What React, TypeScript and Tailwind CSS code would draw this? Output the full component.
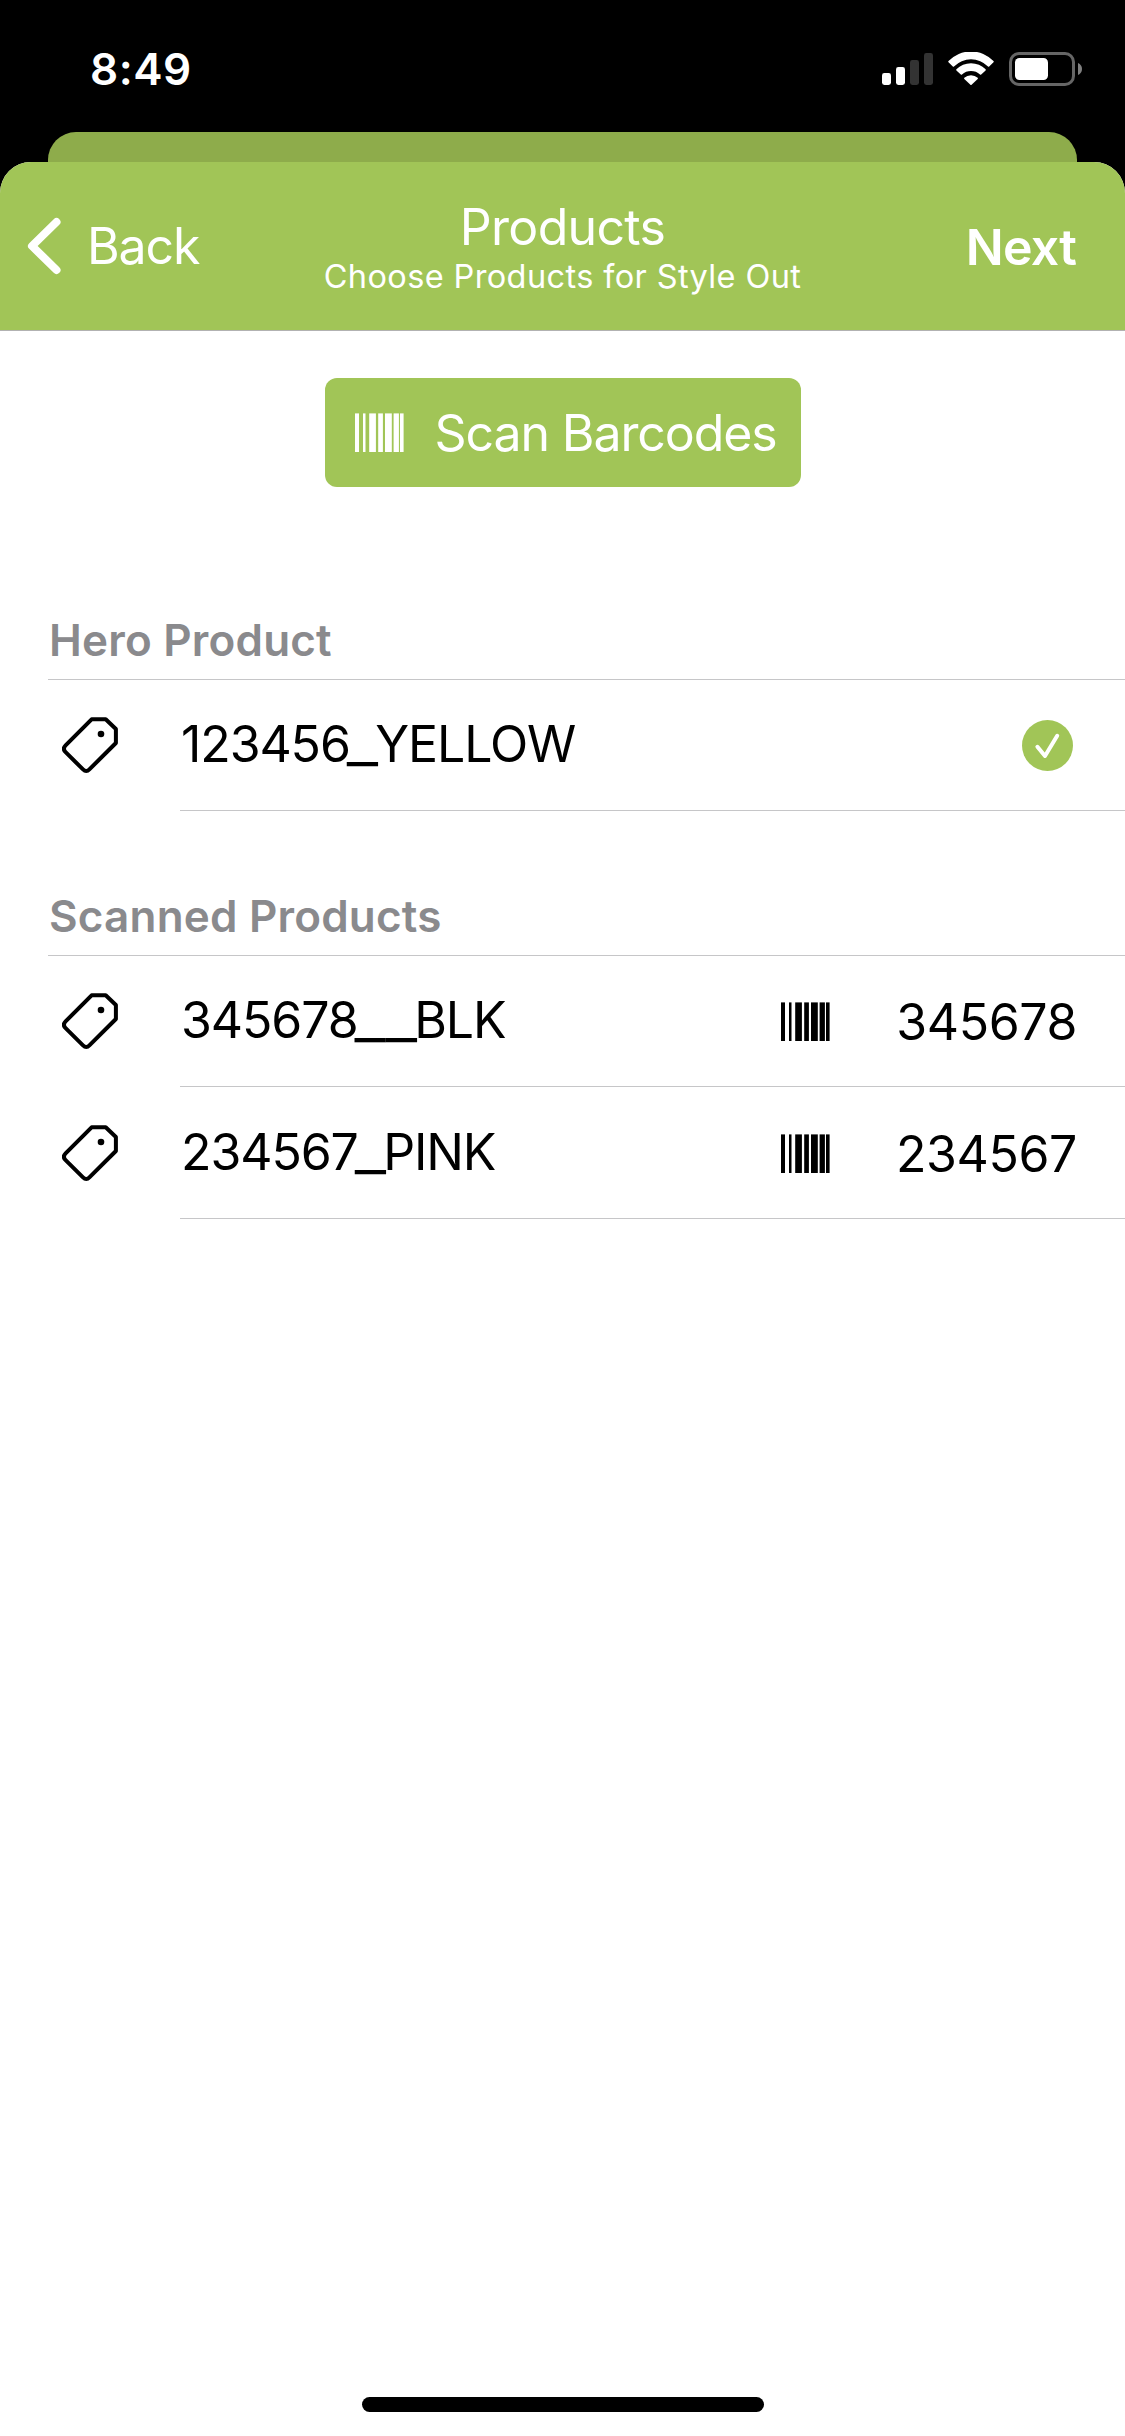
import clsx from "clsx";

interface Product {
  name: string;
  barcode?: string;
  selected?: boolean;
}

const heroProducts: Product[] = [{ name: "123456_YELLOW", selected: true }];

const scannedProducts: Product[] = [
  { name: "345678__BLK", barcode: "345678" },
  { name: "234567_PINK", barcode: "234567" },
];

function SignalIcon() {
  return (
    <svg width="51" height="33" viewBox="0 0 51 33" fill="#fff">
      <rect x="0" y="21" width="9" height="12" rx="2.4" />
      <rect x="14" y="15" width="9" height="18" rx="2.4" />
      <rect x="28" y="8" width="9" height="25" rx="2.4" fill="#333" />
      <rect x="42" y="1" width="9" height="32" rx="2.4" fill="#333" />
    </svg>
  );
}

function WifiIcon() {
  return (
    <svg width="46" height="33" viewBox="0 0 46 33" fill="#fff">
      <path d="M.5 9.1A31 31 0 0 1 45.5 9.1Q46 9.7 45.5 10.3L41.2 14.4Q40.6 15 40 14.4A24 24 0 0 0 6 14.4Q5.4 15 4.8 14.4L.5 10.3Q0 9.7 .5 9.1Z" />
      <path d="M8.4 17.3A20.5 20.5 0 0 1 37.6 17.3Q38.1 17.9 37.6 18.4L33.2 22.5Q32.6 23 32 22.5A13.4 13.4 0 0 0 14 22.5Q13.4 23 12.8 22.5L8.4 18.4Q7.9 17.9 8.4 17.3Z" />
      <path d="M16.3 25.8A10 10 0 0 1 29.7 25.8Q30.2 26.3 29.7 26.9L23.6 32.7Q23 33.2 22.4 32.7L16.3 26.9Q15.8 26.3 16.3 25.8Z" />
    </svg>
  );
}

function BatteryIcon() {
  return (
    <svg width="73" height="34" viewBox="0 0 73 34">
      <rect x="1.5" y="1.5" width="63" height="31" rx="8.5" fill="none" stroke="#666" strokeWidth="3" />
      <rect x="6" y="6" width="33" height="22" rx="4.5" fill="#fff" />
      <path d="M69 11V23C71.6 22 73 19.6 73 17S71.6 12 69 11Z" fill="#808080" />
    </svg>
  );
}

function BarcodeIcon() {
  return (
    <svg width="49" height="39" viewBox="0 0 49 39" fill="currentColor">
      <rect x="0" y=".4" width="4" height="38.6" />
      <rect x="8" y=".4" width="2.5" height="38.6" />
      <rect x="14.2" y=".4" width="6.7" height="38.6" />
      <rect x="23.2" y=".4" width="4.7" height="38.6" />
      <rect x="30" y=".4" width="6.8" height="38.6" />
      <rect x="38.6" y=".4" width="5.3" height="38.6" />
      <rect x="45" y=".4" width="3.6" height="38.6" />
    </svg>
  );
}

function TagIcon() {
  return (
    <svg width="56" height="57" viewBox="0 0 56 57" fill="none" className="shrink-0">
      <path
        d="M29.6 2.3H43.7L53.9 12V26L27.4 52.4Q24.3 55.6 21 52.4L3.6 35.2Q.2 31.8 3.6 28.4Z"
        stroke="#000"
        strokeWidth="4"
        strokeLinejoin="round"
      />
      <circle cx="39" cy="17" r="3.3" fill="#000" />
    </svg>
  );
}

function CheckIcon() {
  return (
    <svg width="51" height="51" viewBox="0 0 51 51" fill="none">
      <circle cx="25.5" cy="25.5" r="25.5" fill="#a1c557" />
      <path d="M15.4 26.8L23 36L35.2 15.8" stroke="#fff" strokeWidth="4" strokeLinecap="round" strokeLinejoin="round" />
    </svg>
  );
}

function StatusBar() {
  return (
    <div className="flex h-[132px] items-start justify-between pr-[43px] pl-[90px] text-white">
      <span className="mt-[45px] text-[44px] leading-[48px] font-semibold tracking-[0.5px]">8:49</span>
      <div className="flex items-start pt-[52px]">
        <SignalIcon />
        <span className="ml-[15px]">
          <WifiIcon />
        </span>
        <span className="ml-[15px]">
          <BatteryIcon />
        </span>
      </div>
    </div>
  );
}

function NavBar() {
  return (
    <header className="grid h-[169px] grid-cols-[1fr_auto_1fr] items-center rounded-t-[31px] border-b border-[#b2b2b2] bg-[#a1c557] text-white">
      <button type="button" className="flex items-center pl-[27px]">
        <svg width="34" height="58" viewBox="0 0 34 58" fill="none">
          <path d="M29.5 5L5 29L29.5 53" stroke="#fff" strokeWidth="8" strokeLinecap="round" strokeLinejoin="round" />
        </svg>
        <span className="ml-[26px] text-[50px] leading-[60px] tracking-[-1.1px]">Back</span>
      </button>
      <div className="flex flex-col items-center gap-[7px] pt-[5px]">
        <h1 className="text-[50px] leading-[50px] tracking-[-0.7px]">Products</h1>
        <p className="text-[32.5px] leading-[36px] tracking-[0.38px]">Choose Products for Style Out</p>
      </div>
      <button type="button" className="pt-[2px] pr-[49px] text-right text-[50px] leading-[60px] font-semibold tracking-[-0.8px]">
        Next
      </button>
    </header>
  );
}

// underscores are set wider than the rest of the name and tucked under its neighbours
function ProductName({ name }: { name: string }) {
  return (
    <span className="pb-[2px] pl-px text-[50px] leading-[60px] tracking-[-1.1px]">
      {name.split(/(_+)/).map((part, index) => (
        <span
          key={index}
          className={clsx(part.startsWith("_") && "-mx-[3px] text-[70px] leading-[0] font-light tracking-normal")}
        >
          {part}
        </span>
      ))}
    </span>
  );
}

function ProductRow({ product, first }: { product: Product; first: boolean }) {
  return (
    <li className={clsx("flex pl-[62px]", first ? "h-[131px]" : "h-[132px] pt-px")}>
      <div className="flex w-[118px] items-center">
        <TagIcon />
      </div>
      <div className="flex flex-1 items-center justify-between border-b border-[#c6c6c8] pr-[48px]">
        <ProductName name={product.name} />
        {product.barcode && (
          <span className="flex items-center pt-px">
            <BarcodeIcon />
            <span className="ml-[66px] text-[50px] leading-[60px] tracking-[-0.4px]">{product.barcode}</span>
          </span>
        )}
        {product.selected && (
          <span className="mr-[4px]">
            <CheckIcon />
          </span>
        )}
      </div>
    </li>
  );
}

function ProductSection({ title, products, className }: { title: string; products: Product[]; className?: string }) {
  return (
    <section className={className}>
      <h2 className="ml-[48px] border-b border-[#c6c6c8] pb-[15px] pl-px text-[44px] leading-[48px] font-semibold tracking-[0.2px] text-[#8a8a8d]">
        {title}
      </h2>
      <ul>
        {products.map((product, index) => (
          <ProductRow key={product.name} product={product} first={index === 0} />
        ))}
      </ul>
    </section>
  );
}

export default function App() {
  return (
    <div className="flex h-[2436px] w-[1125px] flex-col overflow-hidden bg-black font-['Inter',sans-serif] text-black">
      <StatusBar />
      <div className="mx-[48px] h-[30px] shrink-0 rounded-t-[28px] bg-[#8eac4b]" />
      <div className="flex flex-1 flex-col rounded-t-[31px] bg-white">
        <NavBar />
        <main className="flex flex-1 flex-col">
          <button
            type="button"
            className="mt-[47px] flex h-[109px] w-[476px] items-center self-center rounded-[12px] bg-[#a1c557] pl-[30px] text-white"
          >
            <BarcodeIcon />
            <span className="ml-[31px] text-[50px] leading-[60px] tracking-[-1.1px] whitespace-nowrap">Scan Barcodes</span>
          </button>
          <ProductSection title="Hero Product" products={heroProducts} className="mt-[129px]" />
          <ProductSection title="Scanned Products" products={scannedProducts} className="mt-[81px]" />
        </main>
        <div className="mb-[24px] h-[15px] w-[402px] self-center rounded-full bg-black" />
      </div>
    </div>
  );
}
